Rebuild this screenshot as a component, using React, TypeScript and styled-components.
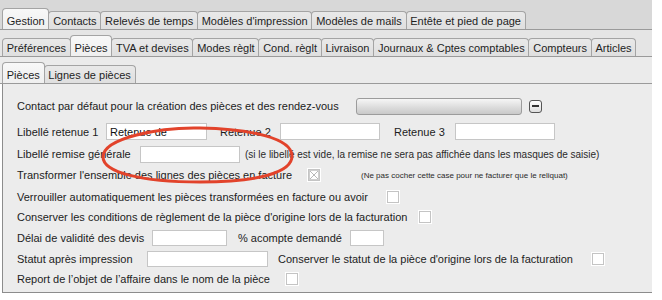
import React from "react";
import styled, { createGlobalStyle } from "styled-components";

const GlobalStyle = createGlobalStyle`
  html, body { margin: 0; padding: 0; background: #ffffff; }
  body {
    font-family: "Liberation Sans", Arial, Helvetica, sans-serif;
    font-size: 11px;
    color: #1c1c1c;
  }
`;

const Frame = styled.div`
  position: relative;
  width: 652px;
`;

const TabStrip = styled.div<{ $h: number; $bg: string }>`
  display: flex;
  align-items: flex-end;
  height: ${(p) => p.$h}px;
  padding-left: 2px;
  background: ${(p) => p.$bg};
  border-bottom: 1px solid #9a9a9a;
`;

const Tab = styled.div<{ $active?: boolean }>`
  box-sizing: border-box;
  height: ${(p) => (p.$active ? 21 : 18)}px;
  display: flex;
  align-items: flex-end;
  padding: 0 3.75px 1px;
  line-height: 14px;
  font-size: 11px;
  white-space: nowrap;
  color: #1e1e1e;
  border: 1px solid #a4a4a4;
  border-bottom: none;
  border-radius: 4px 4px 0 0;
  background: ${(p) =>
    p.$active
      ? "linear-gradient(#f8f8f8, #efefef)"
      : "linear-gradient(#e9e9e9, #dfdfdf)"};
  & + & {
    margin-left: -1px;
  }
`;

const Panel = styled.div`
  box-sizing: border-box;
  margin-left: 2px;
  height: 209px;
  background: #ececec;
  border-left: 1px solid #8c8c8c;
  border-bottom: 1px solid #8c8c8c;
  padding: 10px 0 0 14px;
  display: flex;
  flex-direction: column;
`;

const Row = styled.div<{ $h: number }>`
  display: flex;
  align-items: center;
  height: ${(p) => p.$h}px;
  flex: none;
`;

const Label = styled.span<{ $w: number; $ml?: number }>`
  flex: none;
  width: ${(p) => p.$w}px;
  margin-left: ${(p) => p.$ml ?? 0}px;
  white-space: nowrap;
  line-height: 14px;
`;

const Note = styled.span<{ $size: number; $ml: number }>`
  margin-left: ${(p) => p.$ml}px;
  font-size: ${(p) => p.$size}px;
  white-space: nowrap;
  color: #2a2a2a;
`;

const Field = styled.input<{ $w: number; $h?: number }>`
  box-sizing: border-box;
  flex: none;
  width: ${(p) => p.$w}px;
  height: ${(p) => p.$h ?? 17}px;
  margin: 0;
  padding: 0 3px;
  border: 1px solid #c6c6c6;
  border-radius: 0;
  background: #ffffff;
  font-family: inherit;
  font-size: 11px;
  color: #111;
  outline: none;
`;

const SelectBox = styled.div`
  box-sizing: border-box;
  flex: none;
  width: 166px;
  height: 17px;
  border: 1px solid #9c9c9c;
  border-radius: 3px;
  background: linear-gradient(#f6f6f6, #dadada 60%, #c9c9c9);
`;

const MinusButton = styled.span`
  box-sizing: border-box;
  position: relative;
  flex: none;
  width: 13px;
  height: 13px;
  margin-left: 7px;
  border: 1px solid #555;
  border-radius: 3px;
  background: linear-gradient(#ffffff, #dedede);
  &::after {
    content: "";
    position: absolute;
    left: 2px;
    right: 2px;
    top: 4px;
    height: 2px;
    background: #333;
  }
`;

const Check = styled.span`
  box-sizing: border-box;
  flex: none;
  display: flex;
  align-items: center;
  justify-content: center;
  width: 14px;
  height: 14px;
  background: #ffffff;
  border: 1px solid #ffffff;
  box-shadow: inset 0 0 0 1px #c4c4c4;
`;

const Annotation = styled.svg`
  position: absolute;
  left: 98px;
  top: 122px;
  width: 200px;
  height: 66px;
  pointer-events: none;
  overflow: visible;
`;

const row1 = [
  "Gestion",
  "Contacts",
  "Relevés de temps",
  "Modèles d'impression",
  "Modèles de mails",
  "Entête et pied de page",
];
const row2 = [
  "Préférences",
  "Pièces",
  "TVA et devises",
  "Modes règlt",
  "Cond. règlt",
  "Livraison",
  "Journaux & Cptes comptables",
  "Compteurs",
  "Articles",
];
const row3 = ["Pièces", "Lignes de pièces"];

function Tabs({ items, active, h, bg }: { items: string[]; active: number; h: number; bg: string }) {
  return (
    <TabStrip $h={h} $bg={bg}>
      {items.map((t, i) => (
        <Tab key={t + i} $active={i === active}>
          {t}
        </Tab>
      ))}
    </TabStrip>
  );
}

function CheckBox({ disabled }: { disabled?: boolean }) {
  return (
    <Check>
      {disabled && (
        <svg width="10" height="10" viewBox="0 0 10 10">
          <path d="M1 1 L9 9 M9 1 L1 9" stroke="#b9b9b9" strokeWidth="1" fill="none" />
          <rect x="0.5" y="0.5" width="9" height="9" fill="none" stroke="#cfcfcf" strokeWidth="1" />
        </svg>
      )}
    </Check>
  );
}

export default function App() {
  return (
    <>
      <GlobalStyle />
      <Frame>
        <Tabs items={row1} active={0} h={29} bg="#d8d8d8" />
        <Tabs items={row2} active={1} h={26} bg="#e5e5e5" />
        <Tabs items={row3} active={0} h={26} bg="#ebebeb" />
        <Panel>
          <Row $h={24}>
            <Label $w={339}>Contact par défaut pour la création des pièces et des rendez-vous</Label>
            <SelectBox />
            <MinusButton />
          </Row>
          <Row $h={27}>
            <Label $w={89}>Libellé retenue 1</Label>
            <Field $w={101} defaultValue="Retenue de" readOnly />
            <Label $w={60} $ml={13}>Retenue 2</Label>
            <Field $w={100} readOnly />
            <Label $w={61} $ml={14}>Retenue 3</Label>
            <Field $w={100} readOnly />
          </Row>
          <Row $h={18}>
            <Label $w={123}>Libellé remise générale</Label>
            <Field $w={100} readOnly />
            <Note $size={10} $ml={5}>
              (si le libellé est vide, la remise ne sera pas affichée dans les masques de saisie)
            </Note>
          </Row>
          <Row $h={24}>
            <Label $w={290}>Transformer l'ensemble des lignes des pièces en facture</Label>
            <CheckBox disabled />
            <Note $size={8} $ml={40}>
              (Ne pas cocher cette case pour ne facturer que le reliquat)
            </Note>
          </Row>
          <Row $h={20}>
            <Label $w={369}>Verrouiller automatiquement les pièces transformées en facture ou avoir</Label>
            <CheckBox />
          </Row>
          <Row $h={20}>
            <Label $w={401}>Conserver les conditions de règlement de la pièce d'origine lors de la facturation</Label>
            <CheckBox />
          </Row>
          <Row $h={21}>
            <Label $w={135}>Délai de validité des devis</Label>
            <Field $w={75} $h={16} readOnly />
            <Label $w={112} $ml={11}>% acompte demandé</Label>
            <Field $w={34} $h={16} readOnly />
          </Row>
          <Row $h={21}>
            <Label $w={130}>Statut après impression</Label>
            <Field $w={121} $h={16} readOnly />
            <Label $w={313} $ml={10}>Conserver le statut de la pièce d'origine lors de la facturation</Label>
            <CheckBox />
          </Row>
          <Row $h={20}>
            <Label $w={268}>Report de l’objet de l’affaire dans le nom de la pièce</Label>
            <CheckBox />
          </Row>
        </Panel>
        <Annotation viewBox="98 122 200 66">
          <path
            d="M103 157 C103 138 160 127 200 128 C250 129 292 138 292 156 C292 172 260 182 200 182 C140 182 103 172 103 157 Z"
            fill="none"
            stroke="#e2432b"
            strokeWidth="3"
            strokeLinecap="round"
          />
        </Annotation>
      </Frame>
    </>
  );
}
